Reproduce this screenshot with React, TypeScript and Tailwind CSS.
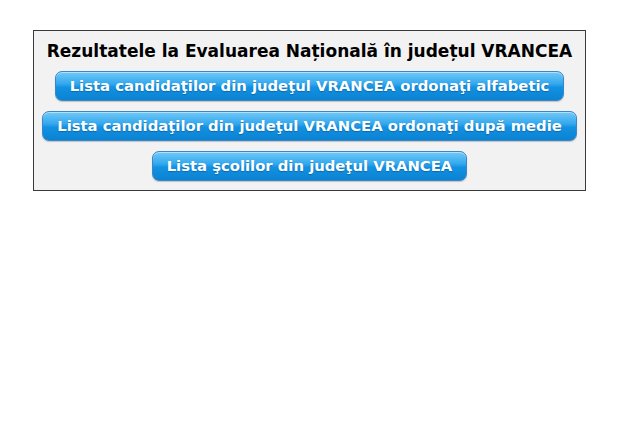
export default function App() {
  const btn =
    "inline-block rounded-[7px] border border-[#3a86c8] bg-[linear-gradient(#72c9f7_0%,#33a8ee_42%,#1291e2_55%,#0b82d2_100%)] text-white font-bold text-[14.8px] leading-none px-[14px] h-[30px] shadow-[0_1px_1px_rgba(0,0,0,0.2),inset_0_1px_0_rgba(255,255,255,0.45)] [text-shadow:0_1px_1px_rgba(0,40,90,0.35)]";
  return (
    <div className="min-h-[428px] w-[620px] bg-white pt-[30px] pl-[33px]" style={{ fontFamily: '"DejaVu Sans", Verdana, sans-serif' }}>
      <div className="w-[553px] h-[161px] border border-[#3a3a3a] bg-[#f2f2f2] flex flex-col items-center pt-[10px]">
        <div className="text-[17px] font-bold text-black leading-[21px]">
          Rezultatele la Evaluarea Națională în județul VRANCEA
        </div>
        <div className="mt-[9px] flex flex-col items-center gap-[10px]">
          <button className={btn}>Lista candidaţilor din judeţul VRANCEA ordonaţi alfabetic</button>
          <button className={btn}>Lista candidaţilor din judeţul VRANCEA ordonaţi după medie</button>
          <button className={btn}>Lista şcolilor din judeţul VRANCEA</button>
        </div>
      </div>
    </div>
  );
}
